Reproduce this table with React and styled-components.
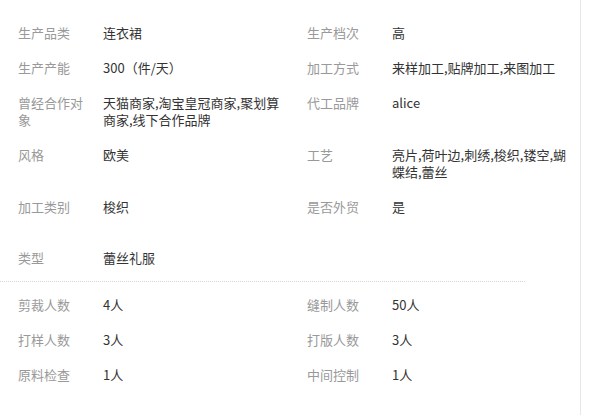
import React from "react";
import styled, { createGlobalStyle } from "styled-components";

const Global = createGlobalStyle`
  html, body { margin: 0; padding: 0; background: #fff; }
  body {
    font-family: "Noto Sans CJK SC", "Microsoft YaHei", "Noto Sans", sans-serif;
    font-size: 13px;
    line-height: 17px;
    color: #333;
  }
`;

const Page = styled.div`
  width: 581px;
  min-height: 100vh;
  box-sizing: border-box;
  border-right: 1px solid #e6e6e6;
  background: #fff;
`;

const Grid = styled.div`
  display: grid;
  grid-template-columns: 289px 289px;
  row-gap: 18px;
  padding-left: 18px;
  padding-top: ${(p) => p.$top}px;
`;

const Item = styled.div`
  display: flex;
  align-items: flex-start;
`;

const Label = styled.div`
  flex: none;
  width: 70px;
  margin-right: 15px;
  color: #999;
`;

const Value = styled.div`
  width: 180px;
  color: #333;
`;

const Divider = styled.div`
  width: 525px;
  margin-top: 15px;
  border-top: 1px dotted #d6d6d6;
`;

const top = [
  ["生产品类", "连衣裙"],
  ["生产档次", "高"],
  ["生产产能", "300（件/天）"],
  ["加工方式", "来样加工,贴牌加工,来图加工"],
  ["曾经合作对象", "天猫商家,淘宝皇冠商家,聚划算商家,线下合作品牌"],
  ["代工品牌", "alice"],
  ["风格", "欧美"],
  ["工艺", "亮片,荷叶边,刺绣,梭织,镂空,蝴蝶结,蕾丝"],
  ["加工类别", "梭织"],
  ["是否外贸", "是"],
];

const staff = [
  ["剪裁人数", "4人"],
  ["缝制人数", "50人"],
  ["打样人数", "3人"],
  ["打版人数", "3人"],
  ["原料检查", "1人"],
  ["中间控制", "1人"],
];

const Row = ({ label, value }) => (
  <Item>
    <Label>{label}</Label>
    <Value>{value}</Value>
  </Item>
);

export default function App() {
  return (
    <>
      <Global />
      <Page>
        <Grid $top={24}>
          {top.map(([l, v]) => (
            <Row key={l} label={l} value={v} />
          ))}
        </Grid>
        <Grid $top={34}>
          <Row label="类型" value="蕾丝礼服" />
        </Grid>
        <Divider />
        <Grid $top={14}>
          {staff.map(([l, v]) => (
            <Row key={l} label={l} value={v} />
          ))}
        </Grid>
      </Page>
    </>
  );
}
